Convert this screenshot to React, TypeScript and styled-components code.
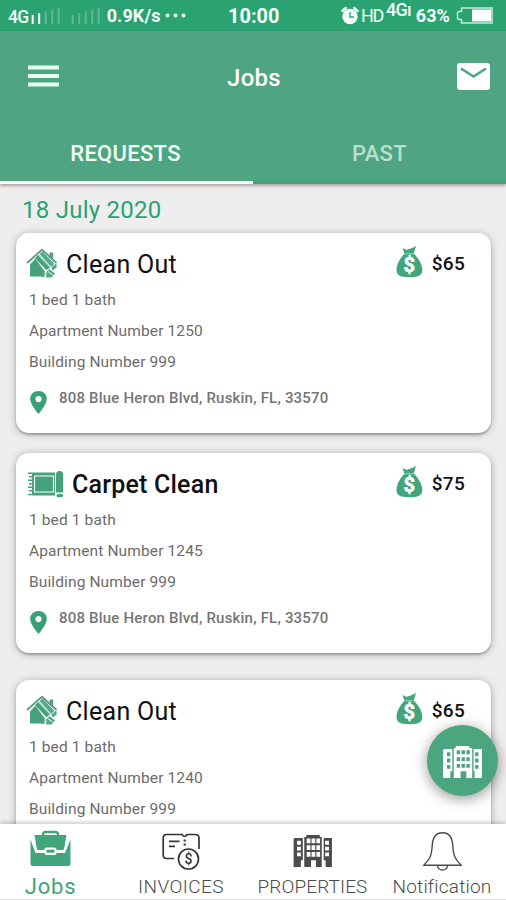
import React from "react";
import styled, { createGlobalStyle } from "styled-components";

const GlobalStyle = createGlobalStyle`
  * {
    box-sizing: border-box;
  }

  body {
    margin: 0;
    font-family: Roboto, "Liberation Sans", sans-serif;
    background: #eeeeee;
  }
`;

const Screen = styled.div`
  position: relative;
  display: flex;
  flex-direction: column;
  width: 506px;
  height: 900px;
  overflow: hidden;
  background: #eeeeee;
`;

const StatusBar = styled.div`
  display: grid;
  grid-template-columns: 228px 113px 1fr;
  align-items: center;
  flex: none;
  height: 31px;
  color: #f2fff8;
  background: #2ba272;
`;

const StatusGroup = styled.div`
  display: flex;
  align-items: center;
  height: 31px;
`;

const StatusText = styled.span<{ $size?: number; $weight?: number; $left?: number; $spacing?: number }>`
  margin-left: ${p => p.$left || 0}px;
  font-size: ${p => p.$size || 18}px;
  font-weight: ${p => p.$weight || 700};
  letter-spacing: ${p => p.$spacing || 0}px;
  line-height: 20px;
  white-space: nowrap;
`;

const Carrier = styled(StatusText)`
  padding-top: 3px;
`;

const Network = styled(StatusText)`
  align-self: flex-start;
`;

const StatusIcon = styled.svg<{ $left?: number }>`
  flex: none;
  margin-left: ${p => p.$left || 0}px;
`;

const Header = styled.header`
  position: relative;
  z-index: 1;
  flex: none;
  height: 153px;
  background: #4fa581;
  box-shadow: 0 2px 3px rgba(70, 60, 50, 0.4);
`;

const Toolbar = styled.div`
  display: grid;
  grid-template-columns: 60px 1fr 60px;
  align-items: center;
  height: 90px;
  padding: 0 16px 0 28px;
`;

const ToolbarTitle = styled.h1`
  margin: 3px 0 0;
  padding-right: 10px;
  color: #ffffff;
  font-size: 24px;
  font-weight: 500;
  letter-spacing: 0.3px;
  line-height: 28px;
  text-align: center;
`;

const MailIcon = styled.svg`
  justify-self: end;
`;

const Tabs = styled.div`
  display: grid;
  grid-template-columns: 1fr 1fr;
  height: 63px;
`;

const Tab = styled.div<{ $active?: boolean }>`
  padding-top: 20px;
  padding-right: ${p => (p.$active ? 2 : 0)}px;
  color: ${p => (p.$active ? "#f1fff8" : "#b9dfcd")};
  font-size: 22px;
  font-weight: 500;
  letter-spacing: 0.3px;
  line-height: 26px;
  text-align: center;
  border-bottom: 3px solid ${p => (p.$active ? "#ffffff" : "#42a37b")};
`;

const JobList = styled.main`
  flex: 1;
  min-height: 0;
  padding: 0 15px 0 16px;
  overflow: hidden;
`;

const DateTitle = styled.h2`
  height: 49px;
  margin: 0;
  padding: 11px 0 0 6px;
  color: #2ba272;
  font-size: 24px;
  font-weight: 400;
  letter-spacing: 0.25px;
  line-height: 30px;
`;

const Card = styled.article<{ $gap: number }>`
  height: 200px;
  margin-bottom: ${p => p.$gap}px;
  padding: 12px 26px 0 10px;
  background: #ffffff;
  border-radius: 13px;
  box-shadow: 0 2px 2px rgba(0, 0, 0, 0.22), 0 1px 9px rgba(0, 0, 0, 0.28);
`;

const CardHeader = styled.div`
  display: flex;
  align-items: center;
  height: 38px;
`;

const CardTitle = styled.h3<{ $bold?: boolean }>`
  flex: 1;
  margin: 0 0 0 ${p => (p.$bold ? 7 : 8)}px;
  padding-top: 2px;
  color: #111111;
  font-size: 25px;
  font-weight: ${p => (p.$bold ? 500 : 400)};
  letter-spacing: ${p => (p.$bold ? 0.2 : 0.3)}px;
  line-height: 30px;
`;

const BagIcon = styled.svg`
  flex: none;
  margin-bottom: 5px;
`;

const Price = styled.div`
  margin: 0 0 2px 9px;
  color: #111111;
  font-size: 19px;
  font-weight: 500;
  letter-spacing: 0.3px;
`;

const Detail = styled.div`
  height: 31px;
  padding-left: 3px;
  color: #6c6c6c;
  font-size: 15.5px;
  letter-spacing: 0.12px;
  line-height: 35.5px;
`;

const Address = styled.div`
  display: flex;
  padding: 13px 0 0 4px;
  color: #757575;
  font-size: 15px;
  font-weight: 500;
  letter-spacing: 0.2px;
  line-height: 18px;

  svg {
    flex: none;
    margin: 2px 12px 0 0;
  }
`;

const Fab = styled.button`
  position: absolute;
  z-index: 2;
  top: 725px;
  left: 427px;
  display: flex;
  align-items: center;
  justify-content: center;
  width: 71px;
  height: 71px;
  padding: 2px 0 0;
  color: #ffffff;
  background: #4ba57f;
  border: 0;
  border-radius: 50%;
  box-shadow: 0 3px 14px rgba(0, 0, 0, 0.42);
`;

const BottomNav = styled.nav`
  position: relative;
  z-index: 1;
  display: grid;
  grid-template-columns: 101px 159px 105px 141px;
  flex: none;
  height: 76px;
  background: #ffffff;
  border-bottom: 1px solid #dddddd;
  box-shadow: 0 -1px 5px rgba(0, 0, 0, 0.25);
`;

const NavItem = styled.div<{ $active?: boolean; $left?: number }>`
  display: flex;
  flex-direction: column;
  align-items: center;
  padding-top: 6px;
  padding-left: ${p => p.$left || 0}px;
  color: ${p => (p.$active ? "#3fa37b" : "#4b4b4b")};
`;

const NavIcon = styled.div<{ $lift?: number }>`
  display: flex;
  align-items: center;
  justify-content: center;
  height: 43px;
  padding-bottom: ${p => p.$lift || 0}px;
`;

const NavLabel = styled.span<{ $size: number; $spacing?: number; $weight?: number }>`
  margin-top: 2px;
  font-size: ${p => p.$size}px;
  font-weight: ${p => p.$weight || 300};
  letter-spacing: ${p => p.$spacing || 0}px;
  line-height: 24px;
  white-space: nowrap;
`;

const Signal: React.FC<{ strength: number; left: number }> = ({ strength, left }) => (
  <StatusIcon $left={left} width="30" height="20" viewBox="0 0 30 20">
    {[0, 1, 2, 3, 4].map(i => (
      <rect
        key={i}
        x={i * 6.5 + 0.7}
        y={9 - i * 1.8}
        width="2"
        height={9 + i * 1.8}
        fill="#ffffff"
        opacity={i < strength ? 1 : 0.25}
      />
    ))}
  </StatusIcon>
);

const AlarmIcon = () => (
  <StatusIcon width="18" height="19" viewBox="0 0 18 19">
    <circle cx="9" cy="10.5" r="7.7" fill="#f2fff8" />
    <path d="M1.4 5 4.800 2M16.600 5 13.200 2" stroke="#f2fff8" strokeWidth="2.400" strokeLinecap="round" />
    <path d="M9 6v5h4" fill="none" stroke="#2ba272" strokeWidth="1.3" />
  </StatusIcon>
);

const BatteryIcon = () => (
  <StatusIcon $left={6} width="38" height="17" viewBox="0 0 38 17">
    <path d="M5.5 1h30.5v15H5.5v-3.5H3a1.500 1.500 0 0 1-1.500-1.500V6A1.500 1.500 0 0 1 3 4.500h2.500z" fill="none" stroke="#c5ecdc" strokeWidth="1.5" />
    <rect x="16" y="2.500" width="19" height="12" fill="#ffffff" />
  </StatusIcon>
);

const HouseIcon = () => (
  <svg width="32" height="32" viewBox="0 0 32 32">
    <path d="M4 16.500 11 9l11 11.500v8H4z" fill="#45a27b" />
    <path d="M1 15 16 1.800l14.500 13.200" fill="none" stroke="#5e9c83" strokeWidth="1.9" />
    <path d="M23.500 4.500h3.700v8l-3.700-3.300z" fill="#5e9c83" />
    <path d="M8.500 9.500 16 3.500 29 16.500 20 25z" fill="#ffffff" />
    <path d="m9 10 3.500-3.200L25 20.500 21.500 23.500z" fill="#45a27b" />
    <path d="m13.500 6 3-2.500L28.500 16l-3.300 3z" fill="#55aa88" />
    <path d="m13 7.500 12 12.500" stroke="#a9d6c4" strokeWidth="1.200" />
    <path d="m16 27.500 4-5 4-3 6-4 1 4-2 10H16z" fill="#ffffff" />
    <path d="m20.500 24 3-3 5.500 4.500-3.500 4h-5.500zM25.200 19.500l5-4 .7 3.700-4 3.300zM16 26.500l3.700-2.500-1.500 5H15z" fill="#55aa88" />
    <path d="m22 23.500 4.500 3.500" stroke="#ffffff" strokeWidth="1" />
  </svg>
);

const CarpetIcon = () => (
  <svg width="39" height="28" viewBox="0 0 39 28">
    <path d="M6 2.500h23v23H6z" fill="#45a27b" />
    <path d="M8.500 6H28M8.500 6v16H28" fill="none" stroke="#ffffff" strokeWidth="1.2" />
    <path d="M27.500 6v16" stroke="#ffffff" strokeWidth="1.2" />
    <path d="M2 3.2h4M3 6.700h3M2 10.200h4M3 13.700h3M2 17.200h4M3 20.700h3M2 24.500h4" stroke="#45a27b" strokeWidth="1.4" />
    <path d="M30 4.500a3.600 3.600 0 0 1 7.200 0v18H30z" fill="#45a27b" />
    <path d="M32 25.600h3.500" stroke="#45a27b" strokeWidth="3.200" strokeLinecap="round" />
  </svg>
);

const MoneyBag = () => (
  <BagIcon width="27" height="33" viewBox="0 0 27 33">
    <path d="M8.3 8.5 6.5 3c2 .5 3 2.3 5 1.5S17 3 20 .7L17.8 8.5z" fill="#43a57c" />
    <path d="M8.3 9h9.8C22 13 26.3 19 26.3 25c0 5.8-4.5 7.2-13 7.2S.5 30.6.5 25C.5 18.7 4.5 13 8.3 9z" fill="#43a57c" />
    <path d="M8 8.8h10" stroke="#7cc0a3" strokeWidth=".8" />
    <text x="13.300" y="27" fill="#ffffff" stroke="#ffffff" strokeWidth=".6" fontFamily="Roboto" fontSize="20" fontWeight="700" textAnchor="middle">$</text>
  </BagIcon>
);

const PinIcon = () => (
  <svg width="17" height="23" viewBox="0 0 17 23">
    <path fillRule="evenodd" d="M8.5 0C3.8 0 .2 3.4.2 8c0 5.6 8.3 15 8.3 15s8.3-9.4 8.3-15C16.8 3.4 13.2 0 8.5 0zm0 11.2a3.1 3.1 0 1 1 0-6.2 3.1 3.1 0 0 1 0 6.2z" fill="#389f76" />
  </svg>
);

const BuildingsIcon = () => (
  <svg width="39" height="32" viewBox="0 0 40 33">
    <path
      fill="currentColor"
      fillRule="evenodd"
      d="M11 2h2V0h14v2h3v31h-6v-7h-6v7h-7zM14 4.500v4h3.500v-4zm5 0v4h3.500v-4zm5 0v4h3.500v-4zM14 11.500v4h3.500v-4zm5 0v4h3.500v-4zm5 0v4h3.500v-4zM14 18.500v4h3.500v-4zm5 0v4h3.500v-4zm5 0v4h3.500v-4zM1 3h8.500v23H7.500v7H0V4zM4 6.500v4h3.500v-4zm0 6.500v4h3.500v-4zm0 6.500v4h3.500v-4zM31.500 3H40v30h-7.500v-7h-1zM33 6.500v4h3.500v-4zm0 6.500v4h3.500v-4zm0 6.500v4h3.500v-4z"
    />
  </svg>
);

const PropertiesIcon = () => (
  <svg width="40" height="32" viewBox="0 0 40 33">
    <path
      fill="currentColor"
      fillRule="evenodd"
      d="M11 2h2V0h14v2h2v31h-6v-7h-5v7h-7zM13.500 3.500v5h3.800v-5zm5 0v5h3.800v-5zm5 0v5h3.800v-5zM13.500 10.500v5h3.800v-5zm5 0v5h3.800v-5zm5 0v5h3.800v-5zM13.500 17.500v5h3.800v-5zm5 0v5h3.800v-5zm5 0v5h3.800v-5zM1 3h8.500v23H7.500v7H0V4zM3.500 6v4h4V6zm0 6v4h4v-4zm0 6v4h4v-4zM31 3h8.500v30H33v-7h-2zM32.500 6v4h4V6zm0 6v4h4v-4zm0 6v4h4v-4z"
    />
  </svg>
);

const BriefcaseIcon = () => (
  <svg width="41" height="37" viewBox="0 0 41 37">
    <path d="M13 6V4.500Q13 2 16 2h9q3 0 3 2.500V6" fill="none" stroke="#43a57c" strokeWidth="2.400" />
    <path d="M4.500 5h32L34 20H7z" fill="#43a57c" />
    <path d="M.5 9.500 5.500 23H35L40.500 9.500V34q0 2-2.500 2H3Q.5 36 .5 34z" fill="#43a57c" />
    <path d="m2 9 4 10.500q.7 1.500 3 1.500h23q2 0 3-1.500L39 9" fill="none" stroke="#ffffff" strokeWidth="2" />
    <rect x="14.500" y="17.500" width="12" height="7.500" rx="2" fill="#ffffff" />
    <rect x="16.500" y="19.700" width="8" height="3" fill="#43a57c" />
  </svg>
);

const InvoiceIcon = () => (
  <svg width="38" height="37" viewBox="0 0 38 37" fill="none" stroke="#353535" strokeWidth="1.700">
    <path d="M12 25.500H4.500Q1.200 25.500 1.200 22V5Q1.200 1.500 4.500 1.500H20q2.500 4 5 0h8q4 0 4 3.500v11" />
    <path d="M7 8.300h10.500M7 13.300h6" />
    <path d="M22.700 6.500v2M22.700 10.500v2" strokeWidth="2.200" />
    <circle cx="26.500" cy="26" r="10" />
    <text x="26.500" y="31" fill="#353535" stroke="none" fontFamily="Roboto" fontSize="14" fontWeight="500" textAnchor="middle">$</text>
  </svg>
);

const BellIcon = () => (
  <svg width="39" height="39" viewBox="0 0 39 39" fill="none" stroke="#4b4b4b" strokeWidth="1.400">
    <path d="M.8 33.200C6 28 8.500 25 9.200 14 9.600 5.500 13.500.8 19.500.8S29.400 5.500 29.800 14c.7 11 3.200 14 8.400 19.200z" />
    <path d="M14.500 33.500q.5 4.500 5 4.500t5-4.500" />
  </svg>
);

interface IJob {
  title: string;
  price: string;
  apartment: string;
  address?: string;
  carpet?: boolean;
  gap: number;
}

const jobs: IJob[] = [
  { title: "Clean Out", price: "$65", apartment: "1250", address: "808 Blue Heron Blvd, Ruskin, FL, 33570", gap: 20 },
  { title: "Carpet Clean", price: "$75", apartment: "1245", address: "808 Blue Heron Blvd, Ruskin, FL, 33570", carpet: true, gap: 27 },
  { title: "Clean Out", price: "$65", apartment: "1240", gap: 0 },
];

const JobCard: React.FC<{ job: IJob }> = ({ job }) => (
  <Card $gap={job.gap}>
    <CardHeader>
      {job.carpet ? <CarpetIcon /> : <HouseIcon />}
      <CardTitle $bold={job.carpet}>{job.title}</CardTitle>
      <MoneyBag />
      <Price>{job.price}</Price>
    </CardHeader>
    <Detail>1 bed 1 bath</Detail>
    <Detail>Apartment Number {job.apartment}</Detail>
    <Detail>Building Number 999</Detail>
    {job.address && (
      <Address>
        <PinIcon />
        {job.address}
      </Address>
    )}
  </Card>
);

const App: React.FC = () => {
  return (
    <>
      <GlobalStyle />
      <Screen>
        <StatusBar>
          <StatusGroup>
            <Carrier $left={8} $size={17.5} $weight={500} $spacing={-0.6}>4G</Carrier>
            <Signal strength={2} left={2} />
            <Signal strength={0} left={10} />
            <StatusText $left={6} $size={18} $spacing={0.1}>0.9K/s</StatusText>
            <StatusIcon $left={4} width="21" height="5" viewBox="0 0 21 5" fill="#e8fff4">
              <circle cx="2.500" cy="2.500" r="2" />
              <circle cx="10.500" cy="2.500" r="2" />
              <circle cx="18.500" cy="2.500" r="2" />
            </StatusIcon>
          </StatusGroup>
          <StatusText $size={20}>10:00</StatusText>
          <StatusGroup>
            <AlarmIcon />
            <StatusText $left={2} $size={18} $weight={400} $spacing={-1.3}>HD</StatusText>
            <Network $left={3} $size={18} $weight={500} $spacing={-0.8}>4Gı</Network>
            <StatusText $left={5} $size={18}>63%</StatusText>
            <BatteryIcon />
          </StatusGroup>
        </StatusBar>
        <Header>
          <Toolbar>
            <svg width="31" height="23" viewBox="0 0 31 23">
              <path d="M0 2.500h31M0 11h31M0 19.500h31" stroke="#e4fff2" strokeWidth="4" />
            </svg>
            <ToolbarTitle>Jobs</ToolbarTitle>
            <MailIcon width="33" height="27" viewBox="0 0 33 27">
              <rect width="33" height="27" rx="3" fill="#ffffff" />
              <path d="m4 5.500 12.500 8 12.500-8" fill="none" stroke="#4fa581" strokeWidth="2.600" />
            </MailIcon>
          </Toolbar>
          <Tabs>
            <Tab $active>REQUESTS</Tab>
            <Tab>PAST</Tab>
          </Tabs>
        </Header>
        <JobList>
          <DateTitle>18 July 2020</DateTitle>
          {jobs.map(job => (
            <JobCard key={job.apartment} job={job} />
          ))}
        </JobList>
        <Fab aria-label="Properties">
          <BuildingsIcon />
        </Fab>
        <BottomNav>
          <NavItem $active>
            <NavIcon $lift={6}>
              <BriefcaseIcon />
            </NavIcon>
            <NavLabel $size={22} $spacing={0.8} $weight={400}>Jobs</NavLabel>
          </NavItem>
          <NavItem $left={1}>
            <NavIcon $lift={1}>
              <InvoiceIcon />
            </NavIcon>
            <NavLabel $size={19} $spacing={0.45}>INVOICES</NavLabel>
          </NavItem>
          <NavItem>
            <NavIcon $lift={2}>
              <PropertiesIcon />
            </NavIcon>
            <NavLabel $size={19} $spacing={0.1}>PROPERTIES</NavLabel>
          </NavItem>
          <NavItem $left={13}>
            <NavIcon>
              <BellIcon />
            </NavIcon>
            <NavLabel $size={19} $spacing={0.2}>Notification</NavLabel>
          </NavItem>
        </BottomNav>
      </Screen>
    </>
  );
};

export default App;
